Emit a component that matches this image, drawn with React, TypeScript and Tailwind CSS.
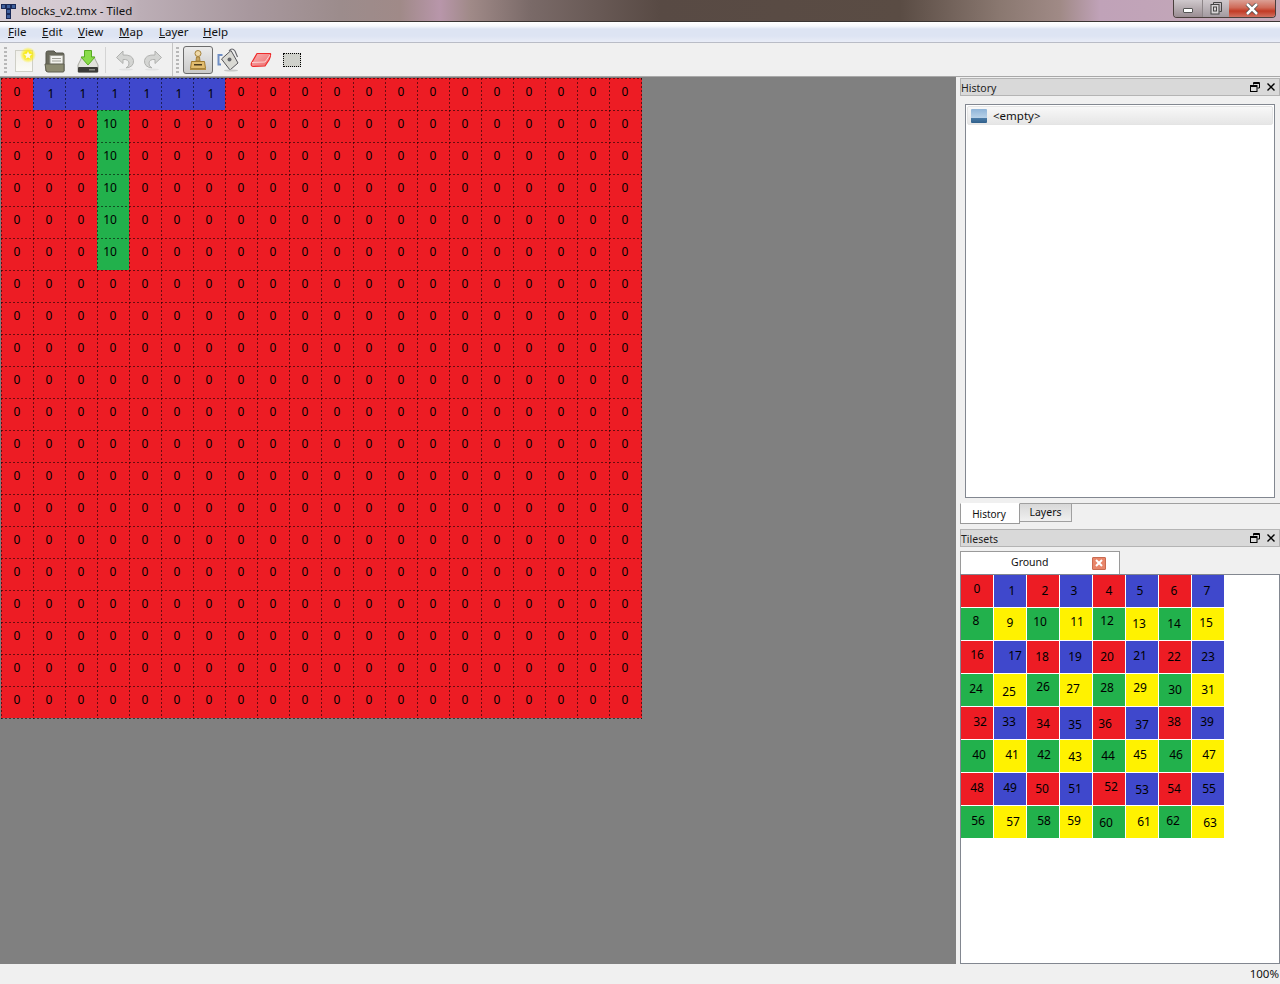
const TILE_CENTERS: [number, number][] = [
  [977,589],[1012,591],[1045,591],[1074,591],[1109,591],[1140,591],[1174,591],[1207,591],
  [976,621],[1010,623],[1040,622],[1077,622],[1107,621],[1139,624],[1174,624],[1206,623],
  [977,655],[1015,656],[1042,657],[1075,657],[1107,657],[1140,656],[1174,657],[1208,657],
  [976,689],[1009,692],[1043,687],[1073,689],[1107,688],[1140,688],[1175,690],[1208,690],
  [980,722],[1009,722],[1043,724],[1075,725],[1105,724],[1142,725],[1174,722],[1207,722],
  [979,755],[1012,755],[1044,755],[1075,757],[1108,756],[1140,755],[1176,755],[1209,755],
  [977,788],[1010,788],[1042,789],[1075,789],[1111,787],[1142,790],[1174,789],[1209,789],
  [978,821],[1013,822],[1044,821],[1074,821],[1106,823],[1144,822],[1173,821],[1210,823],
];

function tileColor(i: number) {
  const row = Math.floor(i / 8) % 2;
  const odd = i % 2 === 1;
  if (row === 0) return odd ? "bg-[#3f48cc]" : "bg-[#ed1c24]";
  return odd ? "bg-[#fff200]" : "bg-[#22b14c]";
}

function Tile({ id }: { id: number }) {
  const col = id % 8;
  const row = Math.floor(id / 8);
  const [cx, cy] = TILE_CENTERS[id];
  const dx = cx - (961 + 33 * col) - 16;
  const dy = cy - (575 + 33 * row) - 16;
  return (
    <div className={`flex h-8 w-8 items-center justify-center text-[12px] leading-none text-black ${tileColor(id)}`}>
      <span style={{ transform: `translate(${dx}px, ${dy}px)` }}>{id}</span>
    </div>
  );
}

function mapTile(r: number, c: number) {
  if (r === 0 && c >= 1 && c <= 6) return 1;
  if (r >= 1 && r <= 5 && c === 3) return 10;
  return 0;
}

function GameMap() {
  const cells = [];
  for (let r = 0; r < 20; r++) for (let c = 0; c < 20; c++) cells.push(<Tile key={`${r}-${c}`} id={mapTile(r, c)} />);
  const lines = [];
  for (let k = 0; k <= 20; k++) {
    const p = 32 * k + 0.5;
    lines.push(<line key={`v${k}`} x1={p} y1={0} x2={p} y2={641} />);
    lines.push(<line key={`h${k}`} x1={0} y1={p} x2={641} y2={p} />);
  }
  return (
    <div className="relative ml-px mt-px h-[641px] w-[641px]">
      <div className="grid grid-cols-[repeat(20,32px)] grid-rows-[repeat(20,32px)] bg-[#ed1c24]">{cells}</div>
      <svg width="641" height="641" className="absolute left-0 top-0" stroke="#000" strokeOpacity="0.55" strokeWidth="1" strokeDasharray="2 2">
        {lines}
      </svg>
    </div>
  );
}

function AppIcon() {
  const blocks = [[0, 3], [5, 3], [10, 3], [5, 8], [5, 13]];
  return (
    <svg width="15" height="20" viewBox="0 0 15 20" className="shrink-0">
      {blocks.map(([x, y], i) => (
        <rect key={i} x={x + 0.5} y={y + 0.5} width="4" height="4" fill="#3f5f9c" stroke="#1a2a58" />
      ))}
    </svg>
  );
}

function Menu() {
  const items: [string, string, string][] = [
    ["F", "ile", "w-[34px]"],
    ["E", "dit", "w-[36px]"],
    ["V", "iew", "w-[41px]"],
    ["M", "ap", "w-[40px]"],
    ["L", "ayer", "w-[44px]"],
    ["H", "elp", "w-[40px]"],
  ];
  return (
    <div className="flex h-[21px] shrink-0 items-center border-b border-[#b9bcc6] bg-[linear-gradient(to_bottom,#ffffff_0%,#f6f8fc_20%,#dde4f3_35%,#dde4f3_70%,#e9edf7_100%)] pl-2 text-[11.5px] text-[#111]">
      {items.map(([a, b, w]) => (
        <div key={a} className={w}>
          <span className="underline">{a}</span>
          {b}
        </div>
      ))}
    </div>
  );
}

function Handle() {
  return <div className="h-[26px] w-[3px] shrink-0 bg-[repeating-linear-gradient(to_bottom,#b8b8b8_0,#b8b8b8_2px,transparent_2px,transparent_4px)]" />;
}

function IconNew() {
  return (
    <svg width="24" height="26" viewBox="0 0 24 26">
      <defs>
        <radialGradient id="glow"><stop offset="0.4" stopColor="#fff000" /><stop offset="1" stopColor="#fff000" stopOpacity="0" /></radialGradient>
        <linearGradient id="page" x1="0" y1="0" x2="0" y2="1"><stop offset="0" stopColor="#f0efe9" /><stop offset="1" stopColor="#fbfbf6" /></linearGradient>
      </defs>
      <rect x="2.5" y="3.5" width="17" height="21" fill="url(#page)" stroke="#cfcfc6" />
      <circle cx="15" cy="8" r="8" fill="url(#glow)" />
      <polygon points="15,3.5 16.4,6.6 19.8,6.9 17.2,9.1 18,12.4 15,10.7 12,12.4 12.8,9.1 10.2,6.9 13.6,6.6" fill="#fffde0" stroke="#e8d820" strokeWidth="0.5" />
    </svg>
  );
}
function IconOpen() {
  return (
    <svg width="24" height="26" viewBox="0 0 24 26">
      <path d="M3 6 Q3 4 5 4 L11 4 L13 6 L20 6 Q21 6 21 8 L21 24 L3 24 Z" fill="#6a6a5c" stroke="#55554a" />
      <rect x="7" y="8.5" width="13" height="9" fill="#f3f3ee" stroke="#9a9a90" />
      <line x1="9" y1="11.5" x2="18" y2="11.5" stroke="#a0a098" />
      <line x1="9" y1="14" x2="18" y2="14" stroke="#a0a098" />
      <path d="M2 17 L21 17 L21 24 Q21 25 20 25 L5 25 Q3 25 3 23 Z" fill="#8b8b72" stroke="#5f5f50" />
    </svg>
  );
}
function IconSave() {
  return (
    <svg width="24" height="26" viewBox="0 0 24 26">
      <path d="M6 10 L18 10 L22 18 L22 25 L2 25 L2 18 Z" fill="#e2e2dc" stroke="#a9a9a2" />
      <rect x="2" y="20" width="20" height="5.5" rx="1" fill="#3b3b38" />
      <rect x="13" y="22" width="6" height="1.5" fill="#8a8a84" />
      <path d="M8.5 3.5 L15.5 3.5 L15.5 10 L19 10 L12 18 L5 10 L8.5 10 Z" fill="#8adc4a" stroke="#58ac22" />
    </svg>
  );
}
function IconUndo({ flip }: { flip?: boolean }) {
  return (
    <svg width="20" height="22" viewBox="0 0 20 22" className={flip ? "-scale-x-100" : ""}>
      <path d="M8 2 L1.5 8.5 L8 14.5 L8 10.5 Q13.5 10 14 14 Q14.5 17 11 19 Q19 18 18.5 11.5 Q17.5 5.5 8 6 Z" fill="#d4d5d3" stroke="#b0b1af" strokeLinejoin="round" />
      <ellipse cx="11" cy="20.5" rx="7" ry="1" fill="#e2e2e2" />
    </svg>
  );
}
function IconStamp() {
  return (
    <svg width="18" height="22" viewBox="0 0 18 22">
      <circle cx="9" cy="4.5" r="3" fill="#efd9a8" stroke="#a5823c" />
      <path d="M7.5 8 L10.5 8 L11 12 L7 12 Z" fill="#caa660" stroke="#a5823c" />
      <path d="M2.5 12.5 L15.5 12.5 L16.5 19.5 L1.5 19.5 Z" fill="#e2bc6e" stroke="#a17a2e" />
      <rect x="5" y="15" width="8" height="1.5" fill="#4a3a1c" />
      <rect x="1" y="19.5" width="16" height="1.5" fill="#b08c44" />
    </svg>
  );
}
function IconBucket() {
  return (
    <svg width="24" height="24" viewBox="0 0 24 24">
      <path d="M5.5 7 L1.5 7 L1.5 16.5 L4 16.5" fill="none" stroke="#6f8ec4" strokeWidth="2" />
      <path d="M4.5 11 L14 2.5 L21 15 L13 22 Z" fill="#d9d9d4" stroke="#55555a" />
      <path d="M12 3 Q15 -1 18 3 L20.5 9" fill="none" stroke="#6a6a70" strokeWidth="1.2" />
      <circle cx="12.5" cy="11.5" r="2" fill="#66666c" />
      <ellipse cx="14" cy="22.5" rx="7" ry="1" fill="#c8c8c8" />
    </svg>
  );
}
function IconEraser() {
  return (
    <svg width="22" height="16" viewBox="0 0 22 16">
      <defs>
        <linearGradient id="er" x1="0" y1="0" x2="1" y2="1"><stop offset="0" stopColor="#f7b4b4" /><stop offset="1" stopColor="#ee6a6a" /></linearGradient>
      </defs>
      <path d="M7 1.5 L20.5 1.5 Q21 4 19 8 L15 14 L3 14.5 Q0.5 14 1.5 11 Z" fill="url(#er)" stroke="#ee2c2c" strokeWidth="1.2" strokeLinejoin="round" />
      <path d="M2 10.5 L15 10 L20 3" fill="none" stroke="#fbd0d0" />
    </svg>
  );
}
function IconRect() {
  return <div className="h-[14px] w-[18px] border border-dotted border-black bg-[#cfd1cb]" />;
}
function IconSlot({ w, children }: { w: string; children: React.ReactNode }) {
  return <div className={`flex shrink-0 items-center justify-center ${w}`}>{children}</div>;
}

function Toolbar() {
  return (
    <div className="flex h-[34px] shrink-0 items-center border-b border-[#a8a8a8] bg-[#f0f0f0]">
      <div className="ml-1"><Handle /></div>
      <IconSlot w="ml-[2px] w-[32px]"><IconNew /></IconSlot>
      <IconSlot w="w-[28px]"><IconOpen /></IconSlot>
      <IconSlot w="ml-[7px] w-[24px]"><IconSave /></IconSlot>
      <div className="ml-[5px] h-[26px] w-px bg-[#d4d4d4]" />
      <IconSlot w="ml-[9px] w-[20px]"><IconUndo /></IconSlot>
      <IconSlot w="ml-[8px] w-[20px]"><IconUndo flip /></IconSlot>
      <div className="ml-[9px] h-[33px] w-px bg-[#c4c4c4]" />
      <div className="ml-[3px]"><Handle /></div>
      <div className="ml-[4px] flex h-[28px] w-[30px] shrink-0 items-center justify-center rounded-[3px] border border-[#6c6c6c] bg-[linear-gradient(to_bottom,#ebebeb,#c9c9c9)]">
        <IconStamp />
      </div>
      <IconSlot w="ml-[4px] w-[24px]"><IconBucket /></IconSlot>
      <IconSlot w="ml-[9px] w-[22px]"><IconEraser /></IconSlot>
      <IconSlot w="ml-[11px] w-[18px]"><IconRect /></IconSlot>
    </div>
  );
}

function DockHeader({ title }: { title: string }) {
  return (
    <div className="flex h-[18px] shrink-0 items-center border border-[#b4b4b4] bg-[#d9d9d9] text-[10.5px] text-[#222]">
      <span className="translate-y-[2px]">{title}</span>
      <svg width="10" height="10" viewBox="0 0 10 10" className="ml-auto" fill="none" stroke="#000">
        <path d="M3.5 2.5 V0.5 H9.5 V6 H7.5" />
        <rect x="3" y="1" width="6" height="1" fill="#000" stroke="none" />
        <rect x="0.5" y="3.5" width="6.5" height="6" />
        <rect x="0" y="3" width="7" height="2" fill="#000" stroke="none" />
      </svg>
      <svg width="10" height="10" viewBox="0 0 10 10" className="ml-[6px] mr-[3px]" stroke="#000" strokeWidth="1.4">
        <path d="M1.5 1.5 L8.5 8.5 M8.5 1.5 L1.5 8.5" />
      </svg>
    </div>
  );
}

function HistoryIcon() {
  return (
    <svg width="16" height="14" viewBox="0 0 16 14" className="shrink-0">
      <defs>
        <linearGradient id="hist" x1="0" y1="0" x2="0" y2="1"><stop offset="0" stopColor="#8fb4d8" /><stop offset="0.65" stopColor="#b9d2e8" /><stop offset="0.66" stopColor="#4a7aa6" /><stop offset="1" stopColor="#2f5f8a" /></linearGradient>
      </defs>
      <rect x="0" y="0" width="16" height="14" rx="1" fill="url(#hist)" />
    </svg>
  );
}

function RightDock() {
  return (
    <div className="flex w-[320px] shrink-0 flex-col bg-[#f0f0f0] text-[#111]">
      <div className="mt-px"><DockHeader title="History" /></div>
      <div className="ml-[5px] mr-[5px] mt-[8px] h-[394px] shrink-0 border border-[#828790] bg-white p-px">
        <div className="flex h-[19px] items-center gap-[6px] rounded-[2px] border border-[#e4e4e4] bg-[linear-gradient(to_bottom,#f8f8f8,#e6e6e6)] pl-[3px] text-[11.5px]">
          <HistoryIcon />
          <span>&lt;empty&gt;</span>
        </div>
      </div>
      <div className="mt-[5px] flex h-[20px] shrink-0 items-start border-t border-[#a0a0a0] text-[10.5px]">
        <div className="-mt-px flex h-[21px] w-[60px] items-center justify-center border border-[#9a9a9a] border-t-white bg-white pr-[2px] pt-[2px] text-[10px]">History</div>
        <div className="flex h-[18px] w-[52px] items-center justify-center border-b border-r border-[#a0a0a0] bg-[linear-gradient(to_bottom,#d8d8d8,#f0f0f0)] pt-[1px]">Layers</div>
      </div>
      <div className="mt-[6px]"><DockHeader title="Tilesets" /></div>
      <div className="mt-[4px] flex h-[23px] w-[160px] shrink-0 items-center border border-b-0 border-[#9a9a9a] bg-white text-[10.5px]">
        <span className="ml-[50px] w-[81px]">Ground</span>
        <div className="flex h-[13px] w-[14px] items-center justify-center rounded-[1px] border border-[#c96a50] bg-[#e8866a]">
          <svg width="8" height="8" viewBox="0 0 8 8" stroke="#fff" strokeWidth="2"><path d="M1 1 L7 7 M7 1 L1 7" /></svg>
        </div>
      </div>
      <div className="flex-1 border border-[#828790] bg-white">
        <div className="grid grid-cols-[repeat(8,32px)] gap-px">
          {Array.from({ length: 64 }, (_, i) => <Tile key={i} id={i} />)}
        </div>
      </div>
    </div>
  );
}

function WindowControls() {
  return (
    <div className="ml-auto mr-1 flex h-[18px] self-start overflow-hidden rounded-b-[4px] border border-t-0 border-[#4a3f3c]">
      <div className="flex w-[29px] items-center justify-center border-r border-[#8d8588] bg-[linear-gradient(to_bottom,#cfc8cc,#9a8d92)]">
        <div className="mt-1 h-[5px] w-[10px] rounded-[1px] border border-[#555] bg-white" />
      </div>
      <div className="flex w-[26px] items-center justify-center bg-[linear-gradient(to_bottom,#cfc8cc,#a39aa0)]">
        <svg width="12" height="13" viewBox="0 0 12 13" fill="none">
          <path d="M3.5 2 V0.5 H11.5 V9.5 H9.5" stroke="#444" />
          <rect x="1" y="2.5" width="8" height="9.5" fill="#d8d4d6" stroke="#444" />
          <rect x="3.5" y="5" width="3" height="4" fill="none" stroke="#444" />
        </svg>
      </div>
      <div className="flex w-[46px] items-center justify-center bg-[linear-gradient(to_bottom,#dba095_0%,#cf6a58_45%,#c23a24_65%,#d07060_100%)]">
        <svg width="14" height="12" viewBox="0 0 14 12">
          <path d="M2 1 L12 11 M12 1 L2 11" stroke="#4a4a4a" strokeWidth="4" />
          <path d="M2 1 L12 11 M12 1 L2 11" stroke="#fff" strokeWidth="2.5" />
        </svg>
      </div>
    </div>
  );
}

export default function App() {
  return (
    <div className="flex h-[984px] w-[1280px] flex-col overflow-hidden bg-[#f0f0f0] font-['Noto_Sans',sans-serif]">
      <div className="flex h-[22px] shrink-0 items-center border-b border-[#3a3432] bg-[linear-gradient(to_right,#d8cfd6_0px,#d2c6ce_100px,#bcaeb6_140px,#a8989e_250px,#9c8c8c_340px,#a08a88_400px,#b896aa_440px,#a08a88_470px,#7a6a68_530px,#584a44_660px,#5a4c44_900px,#8a7870_1000px,#a08a86_1060px,#c0a2b8_1100px,#c4aab8_1280px)]">
        <div className="ml-px"><AppIcon /></div>
        <span className="ml-[5px] text-[11.5px] text-[#111]">blocks_v2.tmx - Tiled</span>
        <WindowControls />
      </div>
      <Menu />
      <Toolbar />
      <div className="flex h-[887px] shrink-0">
        <div className="w-[956px] shrink-0 bg-[#808080]"><GameMap /></div>
        <div className="w-[4px] shrink-0" />
        <RightDock />
      </div>
      <div className="flex flex-1 items-center justify-end pr-[1px] text-[11.5px] text-[#111]">100%</div>
    </div>
  );
}
